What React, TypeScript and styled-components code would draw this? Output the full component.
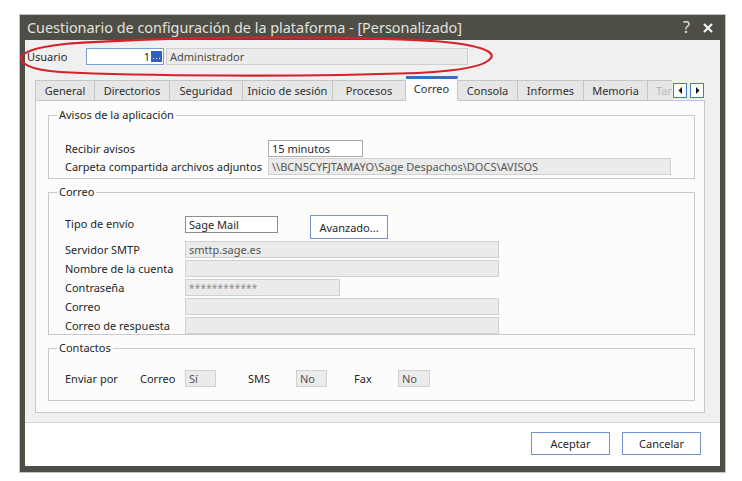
import React from 'react';
import styled, { createGlobalStyle } from 'styled-components';

const Global = createGlobalStyle`
  html, body { margin: 0; padding: 0; background: #ffffff; }
  body {
    font-family: "Noto Sans", "Liberation Sans", sans-serif;
    font-size: 11px;
    color: #262626;
  }
  * { box-sizing: border-box; }
`;

const Page = styled.div`
  position: relative;
  width: 742px;
  height: 481px;
  padding: 15px 0 0 20px;
`;

const Window = styled.div`
  width: 705px;
  border: 5px solid #4e4e46;
  border-top: 0;
  border-bottom-width: 6px;
  box-shadow: 0 0 0 1px #c4c4c4;
  display: flex;
  flex-direction: column;
`;

const TitleBar = styled.div`
  height: 25px;
  background: #4e4e46;
  display: flex;
  align-items: center;
  padding: 0 7px 0 2px;
`;

const Title = styled.div`
  font-size: 14.4px;
  line-height: 25px;
  color: #e2e2de;
  white-space: nowrap;
`;

const TitleControls = styled.div`
  margin-left: auto;
  display: flex;
  align-items: center;
  gap: 13px;
`;

const Help = styled.span`
  font-size: 16px;
  color: #e2e2de;
  line-height: 25px;
`;

const Body = styled.div`
  background: #f0f0f0;
  padding: 8px 0 9px 0;
  display: flex;
  flex-direction: column;
`;

const UserRow = styled.div`
  display: flex;
  align-items: center;
  height: 17px;
  margin-left: 2px;
`;

const UserLabel = styled.div`
  width: 59px;
  line-height: 17px;
`;

const UserInput = styled.div`
  width: 78px;
  height: 17px;
  border: 1px solid #7b9ed6;
  background: #ffffff;
  display: flex;
  align-items: center;
  justify-content: flex-end;
  padding-right: 1px;
  gap: 1px;
`;

const DotsButton = styled.div`
  width: 11px;
  height: 11px;
  background: #2e61c2;
  display: flex;
  align-items: flex-end;
  justify-content: center;
  padding-bottom: 3px;
`;

const UserName = styled.div`
  width: 302px;
  height: 17px;
  margin-left: 2px;
  border: 1px solid #cfcfcf;
  background: #ebebeb;
  color: #4a4a4a;
  padding: 0 3px;
  line-height: 15px;
`;

const TabControl = styled.div`
  margin: 11px 15px 0 10px;
  display: flex;
  flex-direction: column;
`;

const TabStrip = styled.div`
  height: 25px;
  margin-bottom: -1px;
  position: relative;
  z-index: 1;
  display: flex;
  align-items: flex-end;
`;

const TabViewport = styled.div`
  width: 637px;
  height: 25px;
  overflow: hidden;
  display: flex;
  align-items: flex-end;
`;

const Tab = styled.div<{ $w: number; $active?: boolean; $faded?: boolean; $first?: boolean }>`
  flex: 0 0 ${p => p.$w}px;
  height: ${p => (p.$active ? 25 : 21)}px;
  background: ${p => (p.$active ? '#fcfcfc' : '#e6e6e6')};
  border: 1px solid #c6c6c6;
  border-left-width: ${p => (p.$first ? 1 : 0)}px;
  border-top: ${p => (p.$active ? '3px solid #3a6cc6' : '1px solid #c6c6c6')};
  border-bottom-color: ${p => (p.$active ? '#fcfcfc' : '#c6c6c6')};
  color: ${p => (p.$faded ? '#b8b8b8' : '#303030')};
  display: flex;
  align-items: center;
  justify-content: ${p => (p.$faded ? 'flex-start' : 'center')};
  padding-left: ${p => (p.$faded ? 8 : 0)}px;
  padding-bottom: ${p => (p.$active ? 3 : 1)}px;
  white-space: nowrap;
`;

const Arrows = styled.div`
  display: flex;
  gap: 3px;
  margin-left: 1px;
  margin-bottom: 3px;
`;

const ArrowButton = styled.div`
  width: 14px;
  height: 15px;
  border: 1px solid #4a78c8;
  background: #ffffff;
  display: flex;
  align-items: center;
  justify-content: center;
`;

const Panel = styled.div`
  height: 313px;
  background: #fcfcfc;
  border: 1px solid #c6c6c6;
  padding: 7px 9px 9px 12px;
  display: flex;
  flex-direction: column;
  gap: 6px;
`;

const Group = styled.fieldset<{ $pt: number; $pb: number }>`
  margin: 0;
  border: 1px solid #c9c9c9;
  padding: ${p => p.$pt}px 8px ${p => p.$pb}px 8px;
  min-width: 0;
`;

const Legend = styled.legend`
  padding: 0 2px;
  line-height: 14px;
  color: #262626;
`;

const GroupContent = styled.div<{ $gap: number }>`
  padding-left: 8px;
  display: flex;
  flex-direction: column;
  gap: ${p => p.$gap}px;
`;

const Row = styled.div<{ $h?: number }>`
  display: flex;
  align-items: flex-start;
  height: ${p => p.$h ?? 17}px;
`;

const Label = styled.div<{ $w: number; $ml?: number }>`
  flex: 0 0 ${p => p.$w}px;
  margin-left: ${p => p.$ml ?? 0}px;
  line-height: 17px;
  white-space: nowrap;
`;

const Field = styled.div<{ $w: number; $kind: 'white' | 'dark' | 'gray'; $mt?: number }>`
  flex: 0 0 ${p => p.$w}px;
  height: 17px;
  margin-top: ${p => p.$mt ?? 0}px;
  border: 1px solid
    ${p => (p.$kind === 'dark' ? '#8c8c8c' : p.$kind === 'white' ? '#a9a9a9' : '#d0d0d0')};
  background: ${p => (p.$kind === 'gray' ? '#ebebeb' : '#ffffff')};
  color: ${p => (p.$kind === 'gray' ? '#555555' : '#262626')};
  padding: 0 3px;
  line-height: 15px;
  white-space: nowrap;
  overflow: hidden;
`;

const Stars = styled.span`
  color: #8d8d8d;
  font-size: 10px;
  letter-spacing: 0.2px;
`;

const PushButton = styled.div<{ $w: number; $h: number; $ml?: number }>`
  flex: 0 0 ${p => p.$w}px;
  width: ${p => p.$w}px;
  height: ${p => p.$h}px;
  margin-left: ${p => p.$ml ?? 0}px;
  border: 1px solid #7194cf;
  background: #ffffff;
  color: #262626;
  display: flex;
  align-items: center;
  justify-content: center;
  white-space: nowrap;
`;

const Footer = styled.div`
  height: 44px;
  background: #ffffff;
  border-top: 1px solid #d8d8d8;
  padding: 9px 19px 0 0;
  display: flex;
  justify-content: flex-end;
  gap: 12px;
`;

const Annotation = styled.svg`
  position: absolute;
  left: 0;
  top: 0;
  pointer-events: none;
`;

const tabs = [
  { label: 'General', w: 60 },
  { label: 'Directorios', w: 75 },
  { label: 'Seguridad', w: 73 },
  { label: 'Inicio de sesión', w: 90 },
  { label: 'Procesos', w: 73 },
  { label: 'Correo', w: 52, active: true },
  { label: 'Consola', w: 60 },
  { label: 'Informes', w: 66 },
  { label: 'Memoria', w: 64 },
  { label: 'Tareas', w: 60, faded: true },
];

export default function App() {
  return (
    <Page>
      <Global />
      <Window>
        <TitleBar>
          <Title>Cuestionario de configuración de la plataforma - [Personalizado]</Title>
          <TitleControls>
            <Help>?</Help>
            <svg width="10" height="10" viewBox="0 0 10 10">
              <path d="M1 1 L9 9 M9 1 L1 9" stroke="#f2f2f2" strokeWidth="2.2" />
            </svg>
          </TitleControls>
        </TitleBar>

        <Body>
          <UserRow>
            <UserLabel>Usuario</UserLabel>
            <UserInput>
              <span>1</span>
              <DotsButton>
                <svg width="7" height="1" viewBox="0 0 7 1">
                  <rect x="0" y="0" width="1" height="1" fill="#fff" />
                  <rect x="3" y="0" width="1" height="1" fill="#fff" />
                  <rect x="6" y="0" width="1" height="1" fill="#fff" />
                </svg>
              </DotsButton>
            </UserInput>
            <UserName>Administrador</UserName>
          </UserRow>

          <TabControl>
            <TabStrip>
              <TabViewport>
                {tabs.map((t, i) => (
                  <Tab key={t.label} $w={t.w} $active={t.active} $faded={t.faded} $first={i === 0}>
                    {t.label}
                  </Tab>
                ))}
              </TabViewport>
              <Arrows>
                <ArrowButton>
                  <svg width="5" height="7" viewBox="0 0 5 7">
                    <polygon points="4,0 4,7 0.5,3.5" fill="#111" />
                  </svg>
                </ArrowButton>
                <ArrowButton>
                  <svg width="5" height="7" viewBox="0 0 5 7">
                    <polygon points="1,0 1,7 4.5,3.5" fill="#111" />
                  </svg>
                </ArrowButton>
              </Arrows>
            </TabStrip>

            <Panel>
              <Group $pt={18} $pb={3}>
                <Legend>Avisos de la aplicación</Legend>
                <GroupContent $gap={1}>
                  <Row>
                    <Label $w={203}>Recibir avisos</Label>
                    <Field $w={95} $kind="white">15 minutos</Field>
                  </Row>
                  <Row>
                    <Label $w={203}>Carpeta compartida archivos adjuntos</Label>
                    <Field $w={403} $kind="gray">\\BCN5CYFJTAMAYO\Sage Despachos\DOCS\AVISOS</Field>
                  </Row>
                </GroupContent>
              </Group>

              <Group $pt={16} $pb={0}>
                <Legend>Correo</Legend>
                <GroupContent $gap={2}>
                  <Row $h={24}>
                    <Label $w={120}>Tipo de envío</Label>
                    <Field $w={93} $kind="dark" $mt={1}>Sage Mail</Field>
                    <PushButton $w={78} $h={24} $ml={32}>Avanzado...</PushButton>
                  </Row>
                  <Row>
                    <Label $w={120}>Servidor SMTP</Label>
                    <Field $w={314} $kind="gray">smttp.sage.es</Field>
                  </Row>
                  <Row>
                    <Label $w={120}>Nombre de la cuenta</Label>
                    <Field $w={314} $kind="gray" />
                  </Row>
                  <Row>
                    <Label $w={120}>Contraseña</Label>
                    <Field $w={155} $kind="gray">
                      <Stars>************</Stars>
                    </Field>
                  </Row>
                  <Row>
                    <Label $w={120}>Correo</Label>
                    <Field $w={314} $kind="gray" />
                  </Row>
                  <Row>
                    <Label $w={120}>Correo de respuesta</Label>
                    <Field $w={314} $kind="gray" />
                  </Row>
                </GroupContent>
              </Group>

              <Group $pt={15} $pb={13}>
                <Legend>Contactos</Legend>
                <GroupContent $gap={0}>
                  <Row>
                    <Label $w={75}>Enviar por</Label>
                    <Label $w={45}>Correo</Label>
                    <Field $w={31} $kind="gray">Sí</Field>
                    <Label $w={48} $ml={32}>SMS</Label>
                    <Field $w={31} $kind="gray">No</Field>
                    <Label $w={44} $ml={27}>Fax</Label>
                    <Field $w={32} $kind="gray">No</Field>
                  </Row>
                </GroupContent>
              </Group>
            </Panel>
          </TabControl>
        </Body>

        <Footer>
          <PushButton $w={79} $h={23}>Aceptar</PushButton>
          <PushButton $w={79} $h={23}>Cancelar</PushButton>
        </Footer>
      </Window>

      <Annotation width="742" height="481" viewBox="0 0 742 481">
        <path
          d="M64 44 C160 37, 330 35, 432 41 C476 44, 496 51, 491 58 C486 66, 458 71, 418 73 C300 77, 140 76, 60 72 C30 70, 18 63, 22 56 C26 50, 42 46, 74 43"
          fill="none"
          stroke="#d6202a"
          strokeWidth="2.2"
          strokeLinecap="round"
        />
      </Annotation>
    </Page>
  );
}
